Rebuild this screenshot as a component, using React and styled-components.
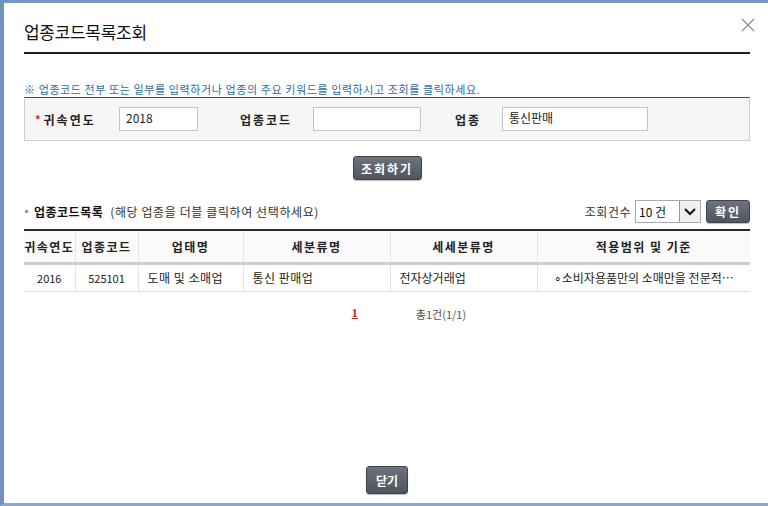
import React from "react"
import styled, { createGlobalStyle } from "styled-components"

const Global = createGlobalStyle`
  html, body {
    margin: 0;
    padding: 0;
    background: #fff;
  }
  body {
    font-family: "Noto Sans CJK KR", "Liberation Sans", sans-serif;
    font-size: 12px;
    color: #222;
  }
  * {
    box-sizing: border-box;
  }
`

const Frame = styled.div`
  width: 768px;
  height: 506px;
  border-top: 3px solid #7196c9;
  border-bottom: 3px solid #8aa8d2;
  border-left: 4px solid #6f91c2;
  background: #fff;
  display: flex;
  flex-direction: column;
  padding: 0 18px 0 20px;
  overflow: hidden;
`

const Header = styled.div`
  height: 51px;
  border-bottom: 2px solid #1e1e1e;
  display: flex;
  justify-content: space-between;
  align-items: flex-start;
`

const Title = styled.h1`
  margin: 17px 0 0;
  font-size: 17px;
  font-weight: normal;
  line-height: 24px;
  color: #111;
  letter-spacing: -0.3px;
`

const Close = styled.button`
  margin: 15px -5px 0 0;
  width: 14px;
  height: 14px;
  padding: 0;
  border: 0;
  background: none;
  cursor: pointer;
  display: flex;
`

const Notice = styled.p`
  margin: 28px 0 0;
  font-size: 11px;
  line-height: 14px;
  color: #2b6aa6;
  letter-spacing: 0.6px;
  white-space: nowrap;
`

const SearchBox = styled.div`
  margin-top: 1px;
  height: 44px;
  background: #f6f6f6;
  border: 1px solid #cfcfcf;
  border-top: 1px solid #4a4a4a;
  display: flex;
  align-items: center;
  padding: 0 0 0 10px;
`

const Label = styled.label`
  width: ${(p) => p.$w}px;
  margin-left: ${(p) => p.$ml || 0}px;
  font-weight: bold;
  font-size: 12px;
  letter-spacing: 2px;
  color: #222;
  display: flex;
  align-items: center;
  white-space: nowrap;
`

const Star = styled.span`
  color: #d21f1f;
  font-size: 11px;
  margin-right: 3px;
  letter-spacing: 0;
`

const Input = styled.input`
  width: ${(p) => p.$w}px;
  height: 24px;
  border: 1px solid #c4c4c4;
  background: #fff;
  font-family: "Noto Sans CJK KR", "Liberation Sans", sans-serif;
  font-size: 12px;
  color: #222;
  padding: 0 6px 4px;
  outline: none;
`

const Center = styled.div`
  display: flex;
  justify-content: center;
  margin-top: ${(p) => p.$mt || 0}px;
`

const DarkButton = styled.button`
  height: ${(p) => p.$h || 24}px;
  width: ${(p) => p.$w}px;
  border: 1px solid #3f444b;
  border-radius: 3px;
  background: linear-gradient(#6d737b, #4f555d);
  color: #fff;
  font-family: "Noto Sans CJK KR", "Liberation Sans", sans-serif;
  font-size: 12px;
  font-weight: bold;
  letter-spacing: ${(p) => p.$ls ?? 2}px;
  padding: 0;
  cursor: pointer;
  box-shadow: 0 1px 1px rgba(0, 0, 0, 0.25);
`

const ListBar = styled.div`
  margin-top: 20px;
  height: 23px;
  display: flex;
  align-items: center;
  justify-content: space-between;
`

const ListTitle = styled.div`
  display: flex;
  align-items: center;
  white-space: nowrap;
  strong {
    font-size: 12px;
    letter-spacing: 0.5px;
    color: #111;
  }
  span {
    margin-left: 7px;
    color: #333;
    letter-spacing: 0.6px;
  }
`

const Bullet = styled.i`
  width: 3px;
  height: 3px;
  background: #999;
  margin: 0 6px 0 1px;
`

const CountBox = styled.div`
  display: flex;
  align-items: center;
  gap: 4px;
  color: #333;
  letter-spacing: 0.5px;
`

const SelectBox = styled.div`
  width: 66px;
  height: 23px;
  border: 1px solid #aaa;
  background: #fff;
  display: flex;
  align-items: stretch;
  margin-right: 1px;
  span {
    flex: 1;
    padding-left: 3px;
    display: flex;
    align-items: center;
    color: #111;
    letter-spacing: 0;
  }
`

const Arrow = styled.div`
  width: 21px;
  border-left: 1px solid #999;
  background: #f0f0f0;
  display: flex;
  align-items: center;
  justify-content: center;
`

const Table = styled.table`
  margin-top: 6px;
  width: 726px;
  border-collapse: collapse;
  table-layout: fixed;
  border-top: 2px solid #2a2a2a;
  th, td {
    white-space: nowrap;
    overflow: hidden;
    border-left: 1px solid #e3e3e3;
    padding: 0;
  }
  th:first-child, td:first-child {
    border-left: 0;
  }
  th {
    height: 33px;
    background: #fafafa;
    font-weight: bold;
    letter-spacing: 1.5px;
    color: #222;
    border-bottom: 3px solid #cdcdcd;
  }
  td {
    height: 28px;
    border-bottom: 1px solid #dedede;
    color: #222;
  }
`

const Cell = styled.td`
  text-align: ${(p) => p.$align || "left"};
  padding-left: ${(p) => (p.$align === "center" ? 0 : 9)}px !important;
  letter-spacing: ${(p) => p.$ls ?? 0}px;
  font-size: ${(p) => p.$fs || 12}px;
`

const Pager = styled.div`
  margin-top: 14px;
  padding-left: 44px;
  display: flex;
  justify-content: center;
  align-items: center;
  gap: 58px;
`

const PageNum = styled.a`
  color: #d11a1a;
  font-weight: bold;
  font-family: "Liberation Serif", serif;
  font-size: 12px;
  text-decoration: underline;
`

const Total = styled.span`
  color: #555;
  font-size: 11px;
`

const Footer = styled.div`
  margin-top: auto;
  padding-bottom: 9px;
  display: flex;
  justify-content: center;
`

const columns = [
  { name: "귀속연도", w: 51 },
  { name: "업종코드", w: 63 },
  { name: "업태명", w: 105 },
  { name: "세분류명", w: 147 },
  { name: "세세분류명", w: 147 },
  { name: "적용범위 및 기준", w: 213 },
]

const App = () => (
  <>
    <Global />
    <Frame>
      <Header>
        <Title>업종코드목록조회</Title>
        <Close aria-label="닫기">
          <svg width="14" height="14" viewBox="0 0 14 14">
            <path d="M1 1 L13 13 M13 1 L1 13" stroke="#8a8a8a" strokeWidth="1.2" />
          </svg>
        </Close>
      </Header>

      <Notice>※ 업종코드 전부 또는 일부를 입력하거나 업종의 주요 키워드를 입력하시고 조회를 클릭하세요.</Notice>

      <SearchBox>
        <Label $w={84}><Star>*</Star>귀속연도</Label>
        <Input $w={79} defaultValue="2018" />
        <Label $w={73} $ml={42}>업종코드</Label>
        <Input $w={108} defaultValue="" />
        <Label $w={47} $ml={34}>업종</Label>
        <Input $w={146} defaultValue="통신판매" />
      </SearchBox>

      <Center $mt={15}>
        <DarkButton $w={69}>조회하기</DarkButton>
      </Center>

      <ListBar>
        <ListTitle>
          <Bullet />
          <strong>업종코드목록</strong>
          <span>(해당 업종을 더블 클릭하여 선택하세요)</span>
        </ListTitle>
        <CountBox>
          조회건수
          <SelectBox>
            <span>10 건</span>
            <Arrow>
              <svg width="12" height="8" viewBox="0 0 12 8">
                <path d="M1 1 L6 6 L11 1" fill="none" stroke="#111" strokeWidth="2" />
              </svg>
            </Arrow>
          </SelectBox>
          <DarkButton $w={44} $h={23}>확인</DarkButton>
        </CountBox>
      </ListBar>

      <Table>
        <colgroup>
          {columns.map((c) => (
            <col key={c.name} style={{ width: c.w }} />
          ))}
        </colgroup>
        <thead>
          <tr>
            {columns.map((c) => (
              <th key={c.name}>{c.name}</th>
            ))}
          </tr>
        </thead>
        <tbody>
          <tr>
            <Cell $align="center" $fs={11}>2016</Cell>
            <Cell $align="center" $fs={11}>525101</Cell>
            <Cell $ls={0.5}>도매 및 소매업</Cell>
            <Cell $ls={0.5}>통신 판매업</Cell>
            <Cell>전자상거래업</Cell>
            <Cell $align="center">∘소비자용품만의 소매만을 전문적…</Cell>
          </tr>
        </tbody>
      </Table>

      <Pager>
        <PageNum href="#">1</PageNum>
        <Total>총1건(1/1)</Total>
      </Pager>

      <Footer>
        <DarkButton $w={42} $h={28} $ls={0}>닫기</DarkButton>
      </Footer>
    </Frame>
  </>
)

export default App
